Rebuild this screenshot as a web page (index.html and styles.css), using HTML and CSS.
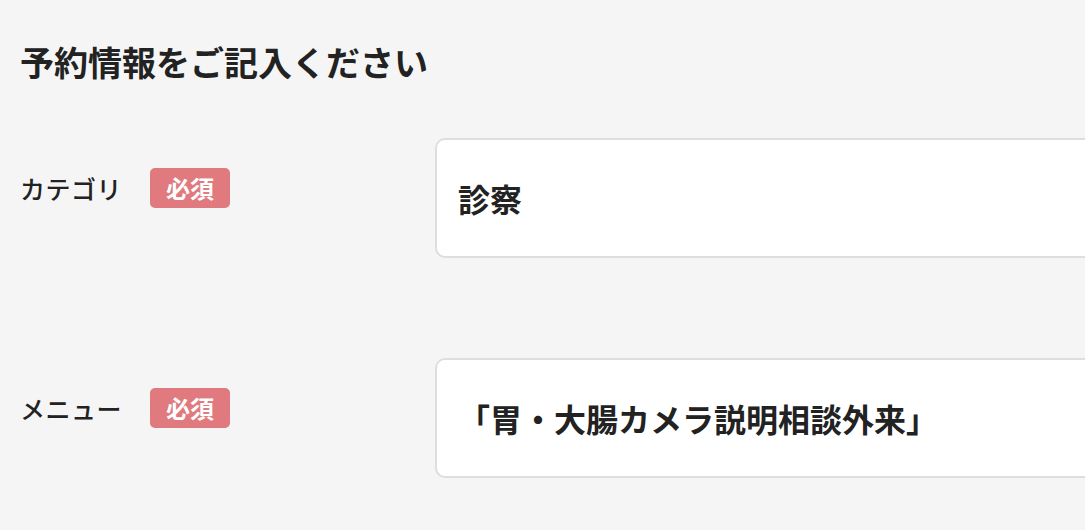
FILE: index.html
```html
<!DOCTYPE html>
<html lang="ja">
<head>
<meta charset="utf-8">
<title>予約情報</title>
<link rel="stylesheet" href="styles.css">
</head>
<body>
<main class="form">
  <h1 class="form-title">予約情報をご記入ください</h1>
  <div class="form-row">
    <div class="form-label">
      <span class="label-text">カテゴリ</span>
      <span class="badge">必須</span>
    </div>
    <div class="field-box"><span class="field-value">診察</span></div>
  </div>
  <div class="form-row">
    <div class="form-label">
      <span class="label-text">メニュー</span>
      <span class="badge">必須</span>
    </div>
    <div class="field-box"><span class="field-value">「胃・大腸カメラ説明相談外来」</span></div>
  </div>
</main>
</body>
</html>
```

FILE: styles.css
```css
html, body {
  margin: 0;
  padding: 0;
  background: #f5f5f5;
  overflow: hidden;
}
body {
  font-family: "Noto Sans CJK JP", "Noto Sans", sans-serif;
  color: #222;
  width: 1085px;
  height: 530px;
}
.form {
  padding: 44px 0 0 20px;
}
.form-title {
  margin: 0 0 58px 0;
  font-size: 34px;
  line-height: 36px;
  font-weight: 700;
  letter-spacing: 0;
}
.form-row {
  display: grid;
  grid-template-columns: 415px 1fr;
  margin-bottom: 100px;
}
.form-row:last-child {
  margin-bottom: 0;
}
.form-label {
  display: flex;
  align-items: center;
  padding-top: 30px;
  height: 40px;
}
.label-text {
  width: 130px;
  font-size: 25px;
  font-weight: 500;
  letter-spacing: 0.5px;
  line-height: 40px;
}
.badge {
  width: 80px;
  height: 40px;
  border-radius: 5px;
  background: #e07a7e;
  color: #fff;
  font-size: 24px;
  font-weight: 700;
  display: flex;
  align-items: center;
  justify-content: center;
  line-height: 1;
}
.field-box {
  box-sizing: border-box;
  height: 120px;
  background: #fff;
  border: 2px solid #dedede;
  border-right: 0;
  border-radius: 10px 0 0 10px;
  display: flex;
  align-items: center;
  padding-left: 21px;
}
.field-value {
  font-size: 32px;
  font-weight: 700;
  line-height: 1;
}
```
